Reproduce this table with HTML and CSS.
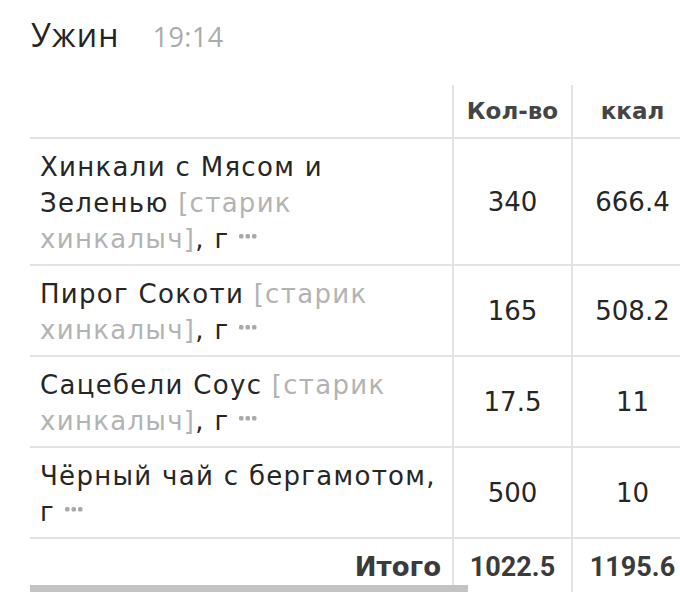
FILE: index.html
```html
<!DOCTYPE html>
<html lang="ru">
<head>
<meta charset="utf-8">
<title>Ужин</title>
<link rel="stylesheet" href="styles.css">
</head>
<body>
<div class="page">
  <header class="meal-head">
    <span class="meal-title">Ужин</span>
    <span class="meal-time">19:14</span>
  </header>
  <table class="meal-table">
    <colgroup>
      <col class="col-name">
      <col class="col-qty">
      <col class="col-kcal">
    </colgroup>
    <thead>
      <tr>
        <th class="h-name"></th>
        <th class="h-num">Кол-во</th>
        <th class="h-num">ккал</th>
      </tr>
    </thead>
    <tbody>
      <tr>
        <td class="c-name">Хинкали с Мясом и Зеленью <span class="brand">[старик хинкалыч]</span>, г <svg class="more" width="18" height="5" viewBox="0 0 18 5"><rect x="0" y="0" width="4.5" height="4.5" rx="1.6"/><rect x="6.5" y="0" width="4.5" height="4.5" rx="1.6"/><rect x="13" y="0" width="4.5" height="4.5" rx="1.6"/></svg></td>
        <td class="c-num">340</td>
        <td class="c-num">666.4</td>
      </tr>
      <tr>
        <td class="c-name">Пирог Сокоти <span class="brand">[старик хинкалыч]</span>, г <svg class="more" width="18" height="5" viewBox="0 0 18 5"><rect x="0" y="0" width="4.5" height="4.5" rx="1.6"/><rect x="6.5" y="0" width="4.5" height="4.5" rx="1.6"/><rect x="13" y="0" width="4.5" height="4.5" rx="1.6"/></svg></td>
        <td class="c-num">165</td>
        <td class="c-num">508.2</td>
      </tr>
      <tr>
        <td class="c-name">Сацебели Соус <span class="brand">[старик хинкалыч]</span>, г <svg class="more" width="18" height="5" viewBox="0 0 18 5"><rect x="0" y="0" width="4.5" height="4.5" rx="1.6"/><rect x="6.5" y="0" width="4.5" height="4.5" rx="1.6"/><rect x="13" y="0" width="4.5" height="4.5" rx="1.6"/></svg></td>
        <td class="c-num">17.5</td>
        <td class="c-num">11</td>
      </tr>
      <tr>
        <td class="c-name">Чёрный чай с бергамотом, г <svg class="more" width="18" height="5" viewBox="0 0 18 5"><rect x="0" y="0" width="4.5" height="4.5" rx="1.6"/><rect x="6.5" y="0" width="4.5" height="4.5" rx="1.6"/><rect x="13" y="0" width="4.5" height="4.5" rx="1.6"/></svg></td>
        <td class="c-num">500</td>
        <td class="c-num">10</td>
      </tr>
    </tbody>
    <tfoot>
      <tr>
        <td class="t-label">Итого</td>
        <td class="t-num">1022.5</td>
        <td class="t-num">1195.6</td>
      </tr>
    </tfoot>
  </table>
  <div class="hscroll"></div>
</div>
</body>
</html>
```

FILE: styles.css
```css
html, body {
  margin: 0;
  padding: 0;
  background: #ffffff;
  overflow: hidden;
  width: 680px;
  height: 592px;
}

.page {
  position: relative;
  width: 680px;
  height: 592px;
  overflow: hidden;
  font-family: "DejaVu Sans", sans-serif;
  color: #262626;
}

.meal-head {
  display: flex;
  align-items: baseline;
  gap: 33px;
  padding: 15px 0 0 31px;
  height: 40px;
  line-height: 40px;
  margin-bottom: 30px;
  font-family: "Open Sans", Roboto, sans-serif;
}

.meal-title {
  font-size: 32px;
  letter-spacing: 1.2px;
  color: #232323;
}

.meal-time {
  font-size: 27px;
  letter-spacing: 0.4px;
  color: #ababab;
}

.meal-table {
  margin-left: 30px;
  width: 662px;
  border-collapse: collapse;
  table-layout: fixed;
}

.col-name { width: 423px; }
.col-qty { width: 119px; }
.col-kcal { width: 120px; }

.meal-table th,
.meal-table td {
  padding: 0;
  border-bottom: 2px solid #e3e3e3;
}

.meal-table th + th,
.meal-table td + td {
  border-left: 2px solid #e3e3e3;
}

.h-num {
  height: 52px;
  font-size: 23px;
  font-weight: bold;
  color: #454545;
  text-align: center;
  vertical-align: middle;
}

.meal-table .c-name {
  padding: 10px 16px 7px 10px;
  font-size: 26px;
  line-height: 36px;
  letter-spacing: 1.3px;
  color: #262626;
  vertical-align: top;
}

.brand {
  color: #b3b3b3;
}

.more {
  fill: #a9a9a9;
  vertical-align: 9px;
}

.c-num {
  font-size: 26px;
  text-align: center;
  vertical-align: middle;
  color: #262626;
}

.t-label,
.t-num {
  height: 56px;
  font-size: 26px;
  font-weight: bold;
  color: #3b3b3b;
  vertical-align: middle;
}

.meal-table .t-label {
  text-align: right;
  padding-right: 11px;
}

.t-num {
  text-align: center;
  font-family: Roboto, sans-serif;
  font-size: 27px;
}

.hscroll {
  position: absolute;
  left: 30px;
  bottom: 0;
  width: 438px;
  height: 7px;
  background: #c3c3c3;
}
```
